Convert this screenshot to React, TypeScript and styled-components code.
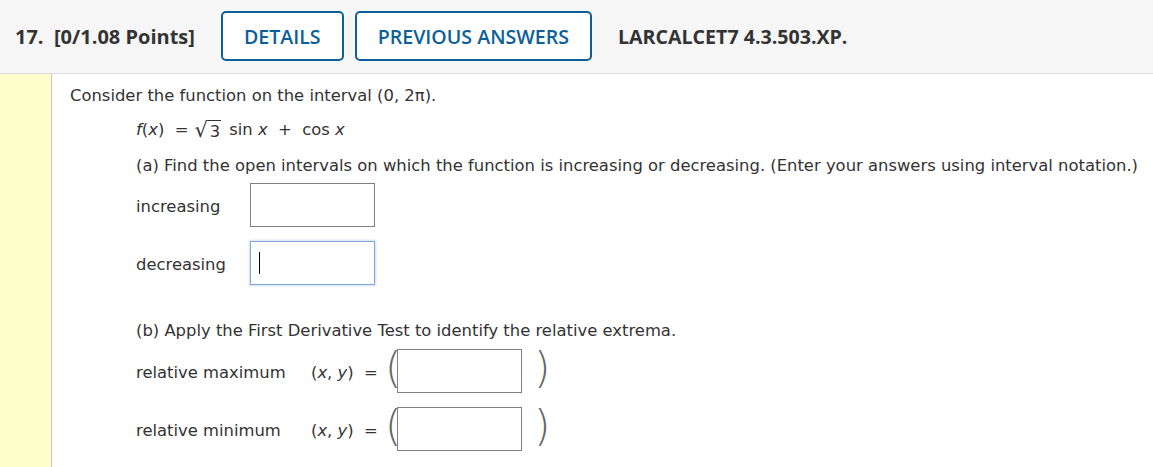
import React from "react";
import styled, { createGlobalStyle } from "styled-components";

const GlobalStyle = createGlobalStyle`
  html, body {
    margin: 0;
    padding: 0;
    background: #ffffff;
  }
`;

const Page = styled.div`
  width: 1153px;
  height: 467px;
  overflow: hidden;
  display: flex;
  flex-direction: column;
`;

const Header = styled.header`
  height: 74px;
  flex-shrink: 0;
  box-sizing: border-box;
  display: flex;
  align-items: center;
  padding: 0 0 1px 15px;
  background: #f6f6f6;
  border-bottom: 1px solid #dcdcdc;
  font-family: "Open Sans", "Liberation Sans", sans-serif;
`;

const QuestionTitle = styled.h2`
  margin: 0 26px 0 0;
  font-size: 20px;
  font-weight: 700;
  color: #333333;
  white-space: pre;
`;

const HeaderButton = styled.button`
  height: 50px;
  box-sizing: border-box;
  margin-right: 11px;
  padding: 0 21px;
  background: #ffffff;
  border: 2px solid #0c609a;
  border-radius: 5px;
  color: #0c609a;
  font-family: inherit;
  font-size: 19.6px;
  font-weight: 600;
`;

const ProblemCode = styled.span`
  margin-left: 15px;
  font-size: 19.6px;
  font-weight: 700;
  color: #333333;
`;

const Body = styled.div`
  flex: 1;
  display: flex;
`;

const Sidebar = styled.aside`
  width: 51px;
  background: #ffffcc;
  border-right: 1px solid #c8c8c8;
`;

const Main = styled.main`
  flex: 1;
  padding: 12px 0 0 18px;
  font-family: Verdana, "DejaVu Sans", sans-serif;
  font-size: 16.4px;
  color: #333333;
`;

const Para = styled.p`
  margin: 0;
  line-height: 20px;
`;

const Indented = styled.div`
  margin-left: 66px;
`;

const Formula = styled.p`
  margin: 11px 0 0 0;
  height: 26px;
  line-height: 26px;
  display: flex;
  align-items: center;
`;

const Var = styled.i`
  font-style: italic;
`;

const Sqrt = styled.span`
  display: inline-flex;
  align-items: flex-end;
  margin: 0 8px 0 6px;
`;

const Radical = styled.span`
  font-size: 21px;
  line-height: 21px;
`;

const Radicand = styled.span`
  border-top: 1px solid #333333;
  padding: 1px 1px 0 2px;
  line-height: 19px;
`;

const PartPrompt = styled.p<{ $top: number }>`
  margin: ${(p) => p.$top}px 0 0 0;
  line-height: 20px;
  white-space: nowrap;
`;

const AnswerRow = styled.div<{ $top: number }>`
  display: flex;
  align-items: center;
  margin-top: ${(p) => p.$top}px;
  height: 44px;
`;

const RowLabel = styled.span<{ $width: number }>`
  width: ${(p) => p.$width}px;
  flex-shrink: 0;
  padding-top: 3px;
`;

const AnswerBox = styled.div<{ $focused?: boolean }>`
  width: 125px;
  height: 44px;
  flex-shrink: 0;
  box-sizing: border-box;
  display: flex;
  align-items: center;
  padding-left: 8px;
  background: #ffffff;
  border: 1px solid ${(p) => (p.$focused ? "#7ea7d6" : "#808080")};
  box-shadow: ${(p) => (p.$focused ? "0 0 2px 1px rgba(126, 167, 214, 0.35)" : "none")};
`;

const Caret = styled.span`
  width: 1px;
  height: 22px;
  background: #000000;
`;

const Point = styled.span`
  width: 74px;
  flex-shrink: 0;
  display: flex;
  align-items: center;
  padding-top: 3px;
`;

const BigParen = styled.span<{ $side: "left" | "right" }>`
  font-family: "DejaVu Sans", sans-serif;
  font-weight: 200;
  font-size: 42px;
  line-height: 44px;
  color: #666666;
  width: 12px;
  margin: ${(p) => (p.$side === "left" ? "-4px 0 0 0" : "-4px 0 0 12px")};
`;

function PointAnswer({ label, top }: { label: string; top: number }) {
  return (
    <AnswerRow $top={top}>
      <RowLabel $width={175}>{label}</RowLabel>
      <Point>
        (<Var>x</Var>,&nbsp;<Var>y</Var>)&nbsp;&nbsp;=
      </Point>
      <BigParen $side="left">(</BigParen>
      <AnswerBox />
      <BigParen $side="right">)</BigParen>
    </AnswerRow>
  );
}

export default function App() {
  return (
    <>
      <GlobalStyle />
      <Page>
        <Header>
          <QuestionTitle>{"17.  [0/1.08 Points]"}</QuestionTitle>
          <HeaderButton>DETAILS</HeaderButton>
          <HeaderButton>PREVIOUS ANSWERS</HeaderButton>
          <ProblemCode>LARCALCET7 4.3.503.XP.</ProblemCode>
        </Header>
        <Body>
          <Sidebar />
          <Main>
            <Para>Consider the function on the interval (0, 2π).</Para>
            <Indented>
              <Formula>
                <Var>f</Var>(<Var>x</Var>)&nbsp;&nbsp;=
                <Sqrt>
                  <Radical>√</Radical>
                  <Radicand>3</Radicand>
                </Sqrt>
                sin&nbsp;<Var>x</Var>&nbsp;&nbsp;+&nbsp;&nbsp;cos&nbsp;<Var>x</Var>
              </Formula>
              <PartPrompt $top={13}>
                (a) Find the open intervals on which the function is increasing or decreasing. (Enter your answers using interval notation.)
              </PartPrompt>
              <AnswerRow $top={7}>
                <RowLabel $width={114}>increasing</RowLabel>
                <AnswerBox />
              </AnswerRow>
              <AnswerRow $top={14}>
                <RowLabel $width={114}>decreasing</RowLabel>
                <AnswerBox $focused>
                  <Caret />
                </AnswerBox>
              </AnswerRow>
              <PartPrompt $top={36}>
                (b) Apply the First Derivative Test to identify the relative extrema.
              </PartPrompt>
              <PointAnswer label="relative maximum" top={8} />
              <PointAnswer label="relative minimum" top={14} />
            </Indented>
          </Main>
        </Body>
      </Page>
    </>
  );
}
